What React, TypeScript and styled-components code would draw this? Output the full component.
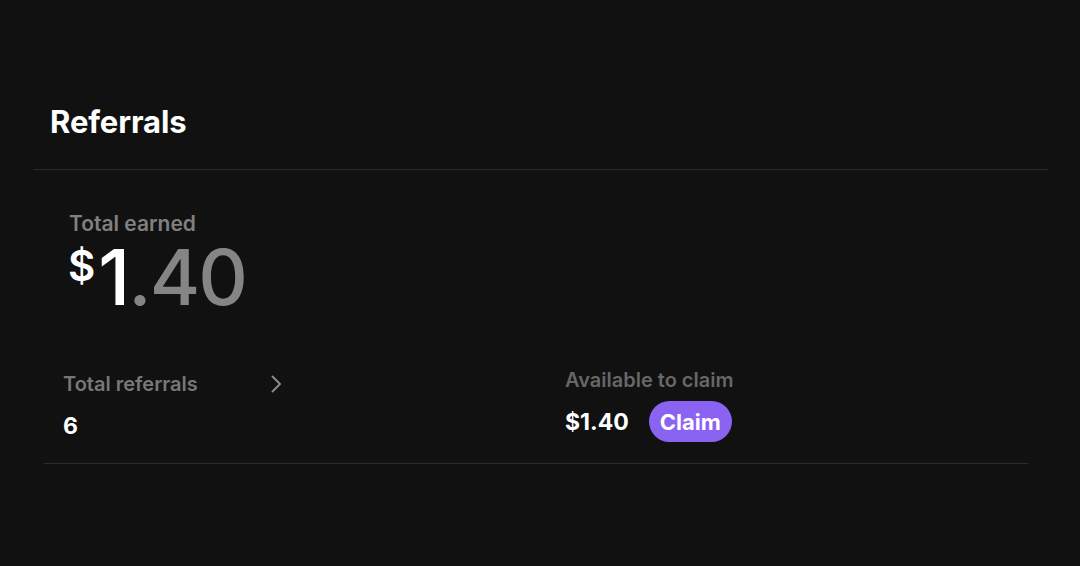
import React from "react";
import styled, { createGlobalStyle } from "styled-components";

const Global = createGlobalStyle`
  html, body { margin: 0; padding: 0; background: #111111; }
  body { font-family: Inter, "Noto Sans", sans-serif; color: #fff; -webkit-font-smoothing: antialiased; }
`;

const Page = styled.div`
  width: 1080px;
  height: 566px;
  box-sizing: border-box;
  padding: 103px 32px 0 33px;
  background: #111111;
`;

const Header = styled.div`
  padding: 0 0 28px 17px;
  border-bottom: 1px solid #2b2b2b;
`;

const Title = styled.h1`
  margin: 0;
  font-size: 31px;
  font-weight: 700;
  line-height: 38px;
  letter-spacing: -0.1px;
  color: #ffffff;
`;

const Section = styled.div`
  margin: 0 20px 0 11px;
  border-bottom: 1px solid #2b2b2b;
  padding-bottom: 21px;
`;

const Earned = styled.div`
  padding: 41px 0 0 25px;
`;

const Label = styled.div<{ $tone?: string; $size?: number }>`
  font-size: ${(p) => p.$size ?? 20}px;
  font-weight: 600;
  line-height: 26px;
  color: ${(p) => p.$tone ?? "#7f7f7f"};
`;

const BigAmount = styled.div`
  display: flex;
  align-items: flex-start;
  font-size: 77px;
  font-weight: 500;
  line-height: 80px;
  letter-spacing: -2px;
  color: #858585;
`;

const Dollar = styled.span`
  font-size: 42px;
  line-height: 42px;
  font-weight: 600;
  letter-spacing: 0;
  color: #ffffff;
  margin-top: 8px;
  margin-left: -1px;
  margin-right: 3px;
`;

const White = styled.span`
  color: #ffffff;
`;

const Stats = styled.div`
  display: grid;
  grid-template-columns: 502px 1fr;
  margin-top: 50px;
`;

const Stat = styled.div<{ $pl: number; $pt: number }>`
  padding-left: ${(p) => p.$pl}px;
  padding-top: ${(p) => p.$pt}px;
  display: flex;
  flex-direction: column;
`;

const LabelRow = styled.div`
  display: flex;
  align-items: center;
  justify-content: space-between;
  width: 220px;
`;

const Value = styled.div<{ $mt?: number }>`
  font-size: 23px;
  font-weight: 700;
  line-height: 30px;
  margin-top: ${(p) => p.$mt ?? 0}px;
  color: #ffffff;
`;

const ClaimRow = styled.div`
  display: flex;
  align-items: center;
  gap: 20px;
  margin-top: 8px;
`;

const ClaimButton = styled.button`
  border: none;
  background: #8b63f2;
  color: #ffffff;
  font-family: inherit;
  font-size: 22px;
  font-weight: 700;
  height: 41px;
  padding: 0 11px;
  border-radius: 21px;
  cursor: pointer;
`;

const Chevron = () => (
  <svg width="14" height="20" viewBox="0 0 14 20" fill="none">
    <path d="M3.5 2.5l7.5 7.5-7.5 7.5" stroke="#8a8a8a" strokeWidth="2" strokeLinecap="round" strokeLinejoin="round" />
  </svg>
);

export default function App() {
  return (
    <>
      <Global />
      <Page>
        <Header>
          <Title>Referrals</Title>
        </Header>
        <Section>
          <Earned>
            <Label $size={21} $tone="#808080">Total earned</Label>
            <BigAmount>
              <Dollar>$</Dollar>
              <White>1</White>.40
            </BigAmount>
          </Earned>
          <Stats>
            <Stat $pl={19} $pt={4}>
              <LabelRow>
                <Label $tone="#777777">Total referrals</Label>
                <Chevron />
              </LabelRow>
              <Value $mt={14}>6</Value>
            </Stat>
            <Stat $pl={19} $pt={0}>
              <Label $tone="#676767">Available to claim</Label>
              <ClaimRow>
                <Value>$1.40</Value>
                <ClaimButton>Claim</ClaimButton>
              </ClaimRow>
            </Stat>
          </Stats>
        </Section>
      </Page>
    </>
  );
}
